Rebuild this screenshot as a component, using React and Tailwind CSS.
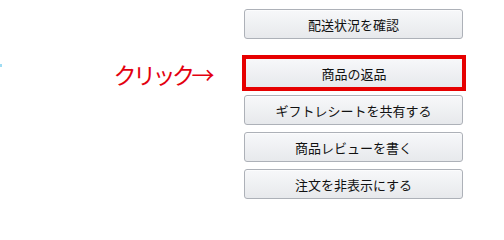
const FONT = { fontFamily: '"Noto Sans CJK JP", "Noto Sans", sans-serif' }

const btn =
  'flex items-center justify-center w-[219px] h-[30px] rounded-[3px] border border-[#adb1b8] bg-gradient-to-b from-[#f7f8fa] to-[#e7e9ec] text-[13px] text-[#111] leading-none shadow-[0_1px_0_rgba(255,255,255,0.6)_inset]'

const MORE = ['ギフトレシートを共有する', '商品レビューを書く', '注文を非表示にする']

export default function App() {
  return (
    <div className="w-[504px] h-[220px] bg-white flex flex-col pt-[9px]" style={FONT}>
      <div className="flex">
        <div className="w-[244px]" />
        <button type="button" className={btn}>配送状況を確認</button>
      </div>

      <div className="flex items-center mt-[16px]">
        <div className="w-[242px] flex items-center justify-between pr-[31px] h-[36px]">
          <span className="self-start mt-[9px] w-[2px] h-[3px] bg-[#9fdcf3]" />
          <span className="text-[23px] text-[#e3000f] tracking-[-3.5px] leading-none mt-[2px]">クリック→</span>
        </div>
        <div className="w-[224px] h-[36px] border-4 border-[#e60000] flex">
          <button
            type="button"
            className="flex-1 flex items-center justify-center bg-gradient-to-b from-[#f7f8fa] to-[#e7e9ec] text-[13px] text-[#111] leading-none"
          >
            商品の返品
          </button>
        </div>
      </div>

      <div className="flex flex-col gap-[7px] mt-[4px] pl-[244px]">
        {MORE.map((label) => (
          <button key={label} type="button" className={btn}>{label}</button>
        ))}
      </div>
    </div>
  )
}
